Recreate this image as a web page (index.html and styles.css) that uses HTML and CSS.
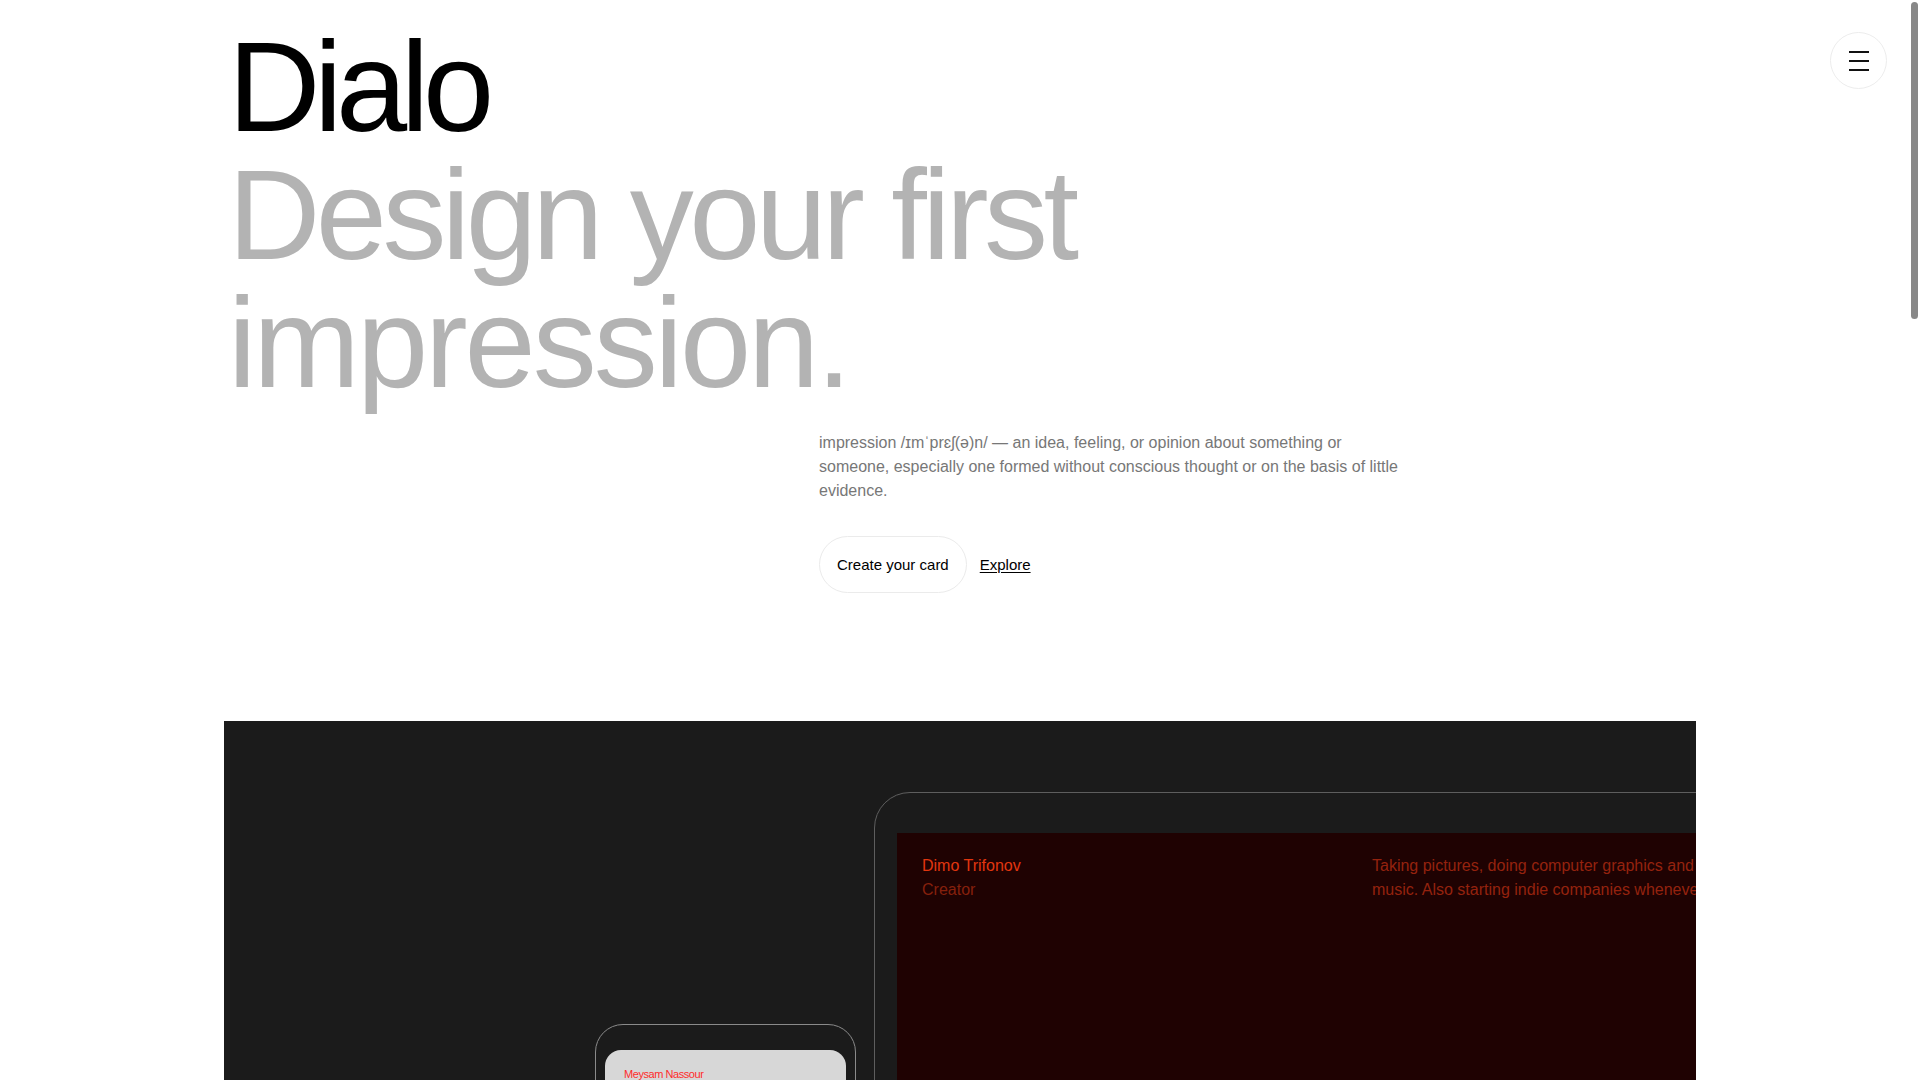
FILE: index.html
```html
<!DOCTYPE html>
<html lang="en">
<head>
<meta charset="utf-8">
<title>Dialo — Design your first impression.</title>
<link rel="stylesheet" href="styles.css">
</head>
<body>
<button class="menu-btn" type="button" aria-label="Menu"><span></span><span></span><span></span></button>
<div class="scroll-thumb" aria-hidden="true"></div>
<main class="page">
  <section class="hero container">
    <h1 class="hero-title">
      <span class="brand">Dialo</span>
      <span class="tagline tagline-1">Design your first</span>
      <span class="tagline tagline-2">impression.</span>
    </h1>
    <div class="hero-body">
      <p class="definition">impression /ɪmˈprɛʃ(ə)n/ — an idea, feeling, or opinion about something or someone, especially one formed without conscious thought or on the basis of little evidence.</p>
      <div class="actions">
        <a class="btn" href="#">Create your card</a>
        <a class="link" href="#">Explore</a>
      </div>
    </div>
  </section>
  <section class="showcase container">
    <div class="phone">
      <div class="phone-card">
        <p class="phone-name">Meysam Nassour</p>
      </div>
    </div>
    <div class="tablet">
      <div class="tablet-screen">
        <div class="profile">
          <p class="name">Dimo Trifonov</p>
          <p class="role">Creator</p>
        </div>
        <p class="bio">Taking pictures, doing computer graphics and making music. Also starting indie companies whenever I can.</p>
      </div>
    </div>
  </section>
</main>
</body>
</html>
```

FILE: styles.css
```css
html, body {
  margin: 0;
  padding: 0;
}

body {
  background: #fff;
  color: #000;
  font-family: "Liberation Sans", Arial, sans-serif;
}

.page {
  min-height: 3680px;
}

.container {
  width: 1472px;
  margin-left: calc((100vw - 1472px) / 2);
  box-sizing: border-box;
}

/* page scroll indicator (overlay) */
.scroll-thumb {
  position: fixed;
  top: 2px;
  right: 2px;
  width: 7px;
  height: 317px;
  background: #888;
  border-radius: 4px;
  z-index: 20;
  pointer-events: none;
}

/* menu button */
.menu-btn {
  position: fixed;
  top: 32px;
  right: 33px;
  width: 57px;
  height: 57px;
  padding: 0;
  border: 1px solid #ececec;
  border-radius: 50%;
  background: #fff;
  display: flex;
  flex-direction: column;
  align-items: center;
  justify-content: center;
  gap: 7px;
  cursor: pointer;
  z-index: 10;
}
.menu-btn span {
  display: block;
  width: 20px;
  height: 2px;
  background: #111;
}

/* hero */
.hero {
  padding-top: 23px;
}
.hero-title {
  margin: 0;
  padding-left: 4px;
  font-size: 128px;
  line-height: 128px;
  font-weight: 400;
}
.brand {
  display: block;
  color: #000;
  letter-spacing: -0.05em;
}
.tagline {
  display: block;
  color: #b3b3b3;
}
.tagline-1 {
  letter-spacing: -0.036em;
}
.tagline-2 {
  letter-spacing: -0.024em;
}
.hero-body {
  margin-left: 595px;
  margin-top: 24px;
}
.definition {
  margin: 0;
  width: 584px;
  font-size: 16px;
  line-height: 24px;
  color: #777;
}
.actions {
  display: flex;
  align-items: center;
  gap: 13px;
  margin-top: 33px;
}
.btn {
  display: inline-block;
  padding: 17px;
  border: 1px solid #ebebeb;
  border-radius: 999px;
  font-size: 15px;
  line-height: 21px;
  color: #000;
  text-decoration: none;
}
.link {
  font-size: 15px;
  line-height: 21px;
  color: #000;
  text-decoration: underline;
  text-underline-offset: 2px;
}

/* showcase */
.showcase {
  margin-top: 128px;
  height: 1100px;
  background: #1b1b1b;
  display: flex;
  align-items: flex-start;
  gap: 18px;
  padding: 71px 0 0 371px;
  overflow: hidden;
}

.phone {
  flex-shrink: 0;
  width: 261px;
  height: 540px;
  margin-top: 232px;
  padding: 25px 9px 0;
  box-sizing: border-box;
  border: 1px solid #8a8a8a;
  border-radius: 28px;
}
.phone-card {
  height: 440px;
  padding: 17px 19px;
  background: #d7d7d7;
  border-radius: 16px;
}
.phone-name {
  margin: 0;
  font-size: 11px;
  line-height: 14px;
  letter-spacing: -0.04em;
  color: #ff2b2b;
}

.tablet {
  flex-shrink: 0;
  width: 1000px;
  height: 900px;
  padding: 40px 22px 0;
  box-sizing: border-box;
  border: 1px solid #5e5e5e;
  border-radius: 36px;
}
.tablet-screen {
  height: 820px;
  padding: 21px 25px;
  background: #1f0202;
  display: grid;
  grid-template-columns: 426px 1fr;
  column-gap: 24px;
  align-content: start;
  font-size: 16px;
  line-height: 24px;
}
.profile p {
  margin: 0;
}
.name {
  color: #e2360f;
}
.role {
  color: #86200c;
}
.bio {
  margin: 0;
  max-width: 400px;
  color: #95220e;
}
```
